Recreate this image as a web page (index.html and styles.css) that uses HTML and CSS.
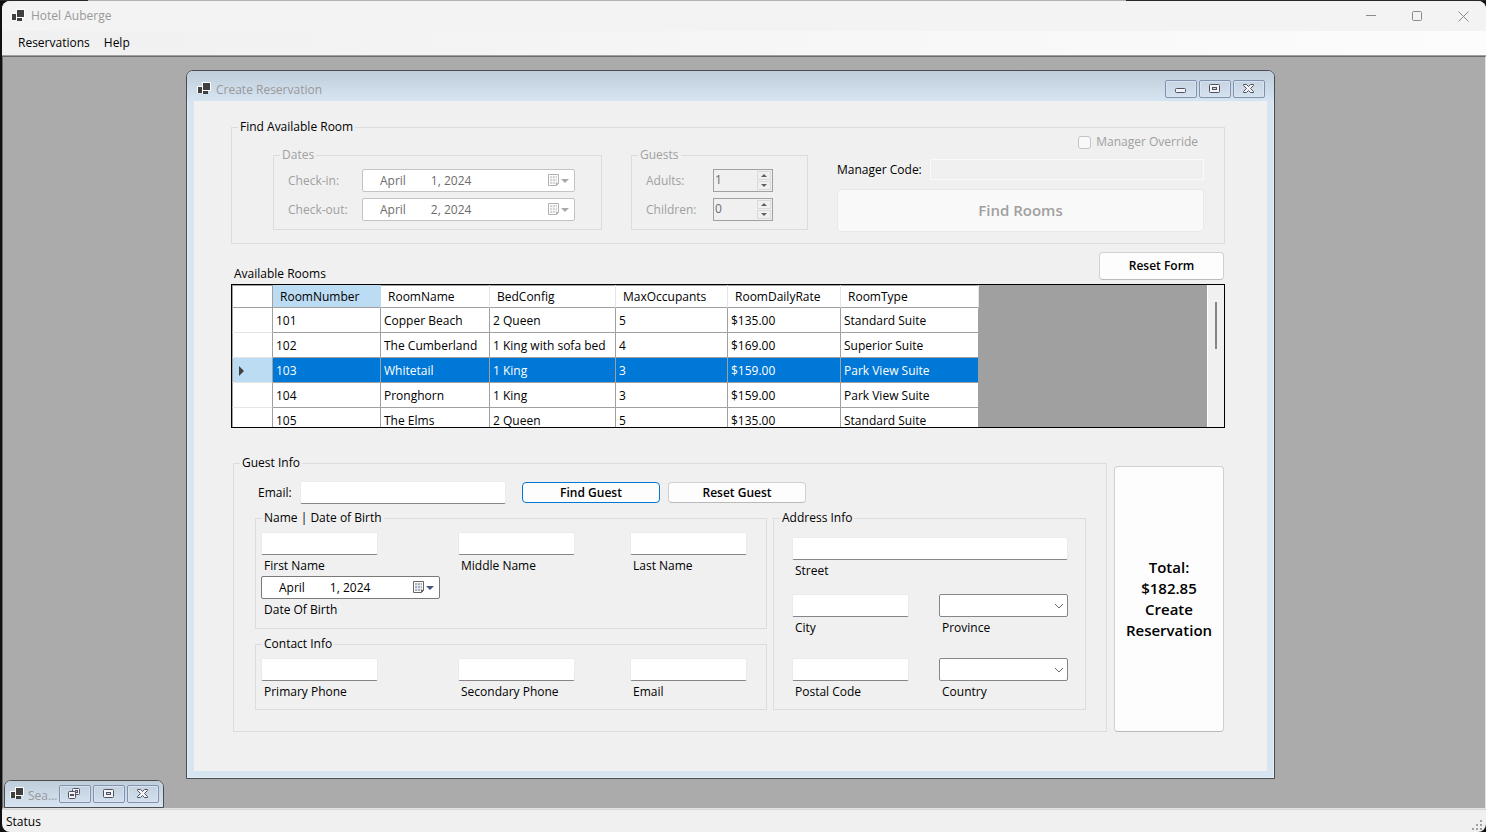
FILE: index.html
```html
<!DOCTYPE html>
<html lang="en">
<head>
<meta charset="utf-8">
<title>Hotel Auberge</title>
<link rel="stylesheet" href="styles.css">
</head>
<body>
<svg class="defs" aria-hidden="true">
  <symbol id="app" viewBox="0 0 14 14">
    <path fill="#fff" d="M0 4h5V0h9v9h-3v3H5v-1H0z"/>
    <path fill="#404040" d="M1 5h4v6H1zM6 1h7v7H6zM6 9h5v3H6z"/>
  </symbol>
  <symbol id="cal" viewBox="0 0 12 13">
    <path fill="#fff" stroke="#6b6464" d="M.5.5h10v9l-2 2h-8z"/>
    <path fill="#aab4c4" d="M2 2h7v8H2z"/>
    <path stroke="#fff" stroke-opacity=".6" d="M2 4.500h7M2 7.500h7M4.500 2v8M7.500 2v8"/>
    <path fill="#6b6464" d="M8 12V9h3z"/>
  </symbol>
  <symbol id="min" viewBox="0 0 14 12">
    <rect x="1.500" y="5.500" width="10" height="4" rx="1" fill="#f4f4f4" stroke="#505064"/>
  </symbol>
  <symbol id="max" viewBox="0 0 14 12">
    <rect x="1.500" y="1.500" width="10" height="8" rx="1" fill="#f4f4f4" stroke="#505064"/>
    <rect x="4.500" y="4.500" width="4" height="2" fill="#c9d6e4" stroke="#505064"/>
  </symbol>
  <symbol id="restore" viewBox="0 0 14 12">
    <rect x="4.500" y=".5" width="7" height="6" rx="1" fill="#f4f4f4" stroke="#505064"/>
    <rect x="7.500" y="2.500" width="2" height="2" fill="#c9d6e4" stroke="#505064"/>
    <rect x=".5" y="3.500" width="7" height="7" rx="1" fill="#f4f4f4" stroke="#505064"/>
    <rect x="2.500" y="6.500" width="3" height="1" fill="#c9d6e4" stroke="#505064"/>
  </symbol>
  <symbol id="close" viewBox="0 0 14 12">
    <path fill="#f4f4f4" stroke="#505064" stroke-linejoin="round" d="M1.500 1.500h3l2 2 2-2h3v1l-3 3 3 3v1h-3l-2-2-2 2h-3v-1l3-3-3-3z"/>
  </symbol>
</svg>

<div class="app">
  <header class="titlebar">
    <svg class="app-icon"><use href="#app"/></svg>
    <h1 class="title">Hotel Auberge</h1>
    <button class="sys" aria-label="Minimize"><svg width="11" height="11"><path d="M0 4.500h10"/></svg></button>
    <button class="sys" aria-label="Maximize"><svg width="11" height="11"><rect x=".5" y=".5" width="9" height="9" rx="1"/></svg></button>
    <button class="sys" aria-label="Close"><svg width="11" height="11"><path d="M.5.5l10 10M10.500.5l-10 10"/></svg></button>
  </header>
  <nav class="menu">
    <button class="menu-item">Reservations</button>
    <button class="menu-item">Help</button>
  </nav>

  <main class="desktop">
    <section class="child reservation">
      <div class="child-bar">
        <svg class="app-icon"><use href="#app"/></svg>
        <h2 class="title">Create Reservation</h2>
        <button class="cap" aria-label="Minimize"><svg><use href="#min"/></svg></button>
        <button class="cap" aria-label="Maximize"><svg><use href="#max"/></svg></button>
        <button class="cap" aria-label="Close"><svg><use href="#close"/></svg></button>
      </div>
      <form class="form">
        <fieldset class="group">
          <legend>Find Available Room</legend>
          <div class="search">
            <fieldset class="group" disabled>
              <legend>Dates</legend>
              <div class="rows">
                <div class="row">
                  <label class="date-label" for="checkin">Check-in:</label>
                  <span class="date"><input id="checkin" type="text" value="April        1, 2024"><button type="button" aria-label="Open calendar"><svg class="cal"><use href="#cal"/></svg><i class="down"></i></button></span>
                </div>
                <div class="row">
                  <label class="date-label" for="checkout">Check-out:</label>
                  <span class="date"><input id="checkout" type="text" value="April        2, 2024"><button type="button" aria-label="Open calendar"><svg class="cal"><use href="#cal"/></svg><i class="down"></i></button></span>
                </div>
              </div>
            </fieldset>
            <fieldset class="group" disabled>
              <legend>Guests</legend>
              <div class="rows">
                <div class="row">
                  <label class="count-label" for="adults">Adults:</label>
                  <span class="spin"><input id="adults" type="number" value="1"><span class="spin-keys"><button type="button" aria-label="More adults"><i class="up"></i></button><button type="button" aria-label="Fewer adults"><i class="down"></i></button></span></span>
                </div>
                <div class="row">
                  <label class="count-label" for="children">Children:</label>
                  <span class="spin"><input id="children" type="number" value="0"><span class="spin-keys"><button type="button" aria-label="More children"><i class="up"></i></button><button type="button" aria-label="Fewer children"><i class="down"></i></button></span></span>
                </div>
              </div>
            </fieldset>
            <div class="manager">
              <label class="override"><input type="checkbox" disabled>Manager Override</label>
              <div class="row code">
                <label for="code">Manager Code:</label>
                <input id="code" type="text" disabled>
              </div>
              <button class="btn large find" type="button" disabled>Find Rooms</button>
            </div>
          </div>
        </fieldset>

        <div class="rooms-head">
          <span id="rooms-label">Available Rooms</span>
          <button class="btn reset" type="button">Reset Form</button>
        </div>
        <div class="rooms">
          <table aria-labelledby="rooms-label">
            <colgroup><col class="c-head"><col class="c-num"><col class="c-name"><col class="c-bed"><col class="c-max"><col class="c-rate"><col class="c-type"></colgroup>
            <thead>
              <tr><th></th><th class="current">RoomNumber</th><th>RoomName</th><th>BedConfig</th><th>MaxOccupants</th><th>RoomDailyRate</th><th>RoomType</th></tr>
            </thead>
            <tbody>
              <tr><th></th><td>101</td><td>Copper Beach</td><td>2 Queen</td><td>5</td><td>$135.00</td><td>Standard Suite</td></tr>
              <tr><th></th><td>102</td><td>The Cumberland</td><td>1 King with sofa bed</td><td>4</td><td>$169.00</td><td>Superior Suite</td></tr>
              <tr class="selected"><th><i class="pointer"></i></th><td>103</td><td>Whitetail</td><td>1 King</td><td>3</td><td>$159.00</td><td>Park View Suite</td></tr>
              <tr><th></th><td>104</td><td>Pronghorn</td><td>1 King</td><td>3</td><td>$159.00</td><td>Park View Suite</td></tr>
              <tr><th></th><td>105</td><td>The Elms</td><td>2 Queen</td><td>5</td><td>$135.00</td><td>Standard Suite</td></tr>
            </tbody>
          </table>
          <div class="scroll"><i class="thumb"></i></div>
        </div>

        <div class="guest">
          <fieldset class="group guest-info">
            <legend>Guest Info</legend>
            <div class="row lookup">
              <label for="email">Email:</label>
              <input class="text" id="email" type="text">
              <button class="btn default" type="button">Find Guest</button>
              <button class="btn" type="button">Reset Guest</button>
            </div>
            <div class="details">
              <div class="person">
                <fieldset class="group">
                  <legend>Name | Date of Birth</legend>
                  <div class="thirds">
                    <div class="field"><input class="text" id="first" type="text"><label for="first">First Name</label></div>
                    <div class="field"><input class="text" id="middle" type="text"><label for="middle">Middle Name</label></div>
                    <div class="field"><input class="text" id="last" type="text"><label for="last">Last Name</label></div>
                  </div>
                  <div class="field birth">
                    <span class="date"><input id="dob" type="text" value="April        1, 2024"><button type="button" aria-label="Open calendar"><svg class="cal"><use href="#cal"/></svg><i class="down"></i></button></span>
                    <label for="dob">Date Of Birth</label>
                  </div>
                </fieldset>
                <fieldset class="group">
                  <legend>Contact Info</legend>
                  <div class="thirds">
                    <div class="field"><input class="text" id="phone1" type="text"><label for="phone1">Primary Phone</label></div>
                    <div class="field"><input class="text" id="phone2" type="text"><label for="phone2">Secondary Phone</label></div>
                    <div class="field"><input class="text" id="mail" type="text"><label for="mail">Email</label></div>
                  </div>
                </fieldset>
              </div>
              <fieldset class="group">
                <legend>Address Info</legend>
                <div class="address">
                  <div class="field street"><input class="text" id="street" type="text"><label for="street">Street</label></div>
                  <div class="field"><input class="text" id="city" type="text"><label for="city">City</label></div>
                  <div class="field combo"><select id="province"></select><svg class="chevron"><path d="M0 1l4 4 4-4"/></svg><label for="province">Province</label></div>
                  <div class="field postal"><input class="text" id="postal" type="text"><label for="postal">Postal Code</label></div>
                  <div class="field combo postal"><select id="country"></select><svg class="chevron"><path d="M0 1l4 4 4-4"/></svg><label for="country">Country</label></div>
                </div>
              </fieldset>
            </div>
          </fieldset>
          <button class="btn large create" type="submit">Total:<br>$182.85<br>Create<br>Reservation</button>
        </div>
      </form>
    </section>

    <section class="child minimized">
      <div class="child-bar">
        <svg class="app-icon"><use href="#app"/></svg>
        <h2 class="title">Sea...</h2>
        <button class="cap" aria-label="Restore"><svg><use href="#restore"/></svg></button>
        <button class="cap" aria-label="Maximize"><svg><use href="#max"/></svg></button>
        <button class="cap" aria-label="Close"><svg><use href="#close"/></svg></button>
      </div>
    </section>
  </main>

  <footer class="status">
    <span>Status</span>
    <svg class="grip" width="12" height="12"><path d="M8 0h2v2H8zM4 4h2v2H4zM8 4h2v2H8zM0 8h2v2H0zM4 8h2v2H4zM8 8h2v2H8z"/></svg>
  </footer>
</div>
</body>
</html>
```

FILE: styles.css
```css
* { box-sizing: border-box; }

body {
  margin: 0;
  min-height: 100vh;
  display: flex;
  flex-direction: column;
  padding: 1px 0 0 2px;
  background: linear-gradient(90deg, #2a2628 88px, #b4b4b4 88px, #b4b4b4 1126px, #2a2628 1126px) 0 0 / 100% 1px no-repeat #101010;
  font: 12px/16px "Open Sans", "Noto Sans", sans-serif;
  color: #000;
}

button, input, select { font: inherit; color: inherit; margin: 0; padding: 0; border: 0; background: none; outline: 0; }
button, i { display: block; }
svg { display: block; }
.defs { position: absolute; width: 0; height: 0; }

.app {
  flex: 1;
  display: flex;
  flex-direction: column;
  background: #f0f0f0;
  border-radius: 8px;
  overflow: hidden;
}

/* Main window bars */
.titlebar { display: flex; align-items: center; height: 30px; padding-left: 9px; background: #f3f3f3; }
.app-icon { width: 14px; height: 14px; flex: none; }
.title { flex: 1; margin: 0 0 0 6px; font-size: 12px; font-weight: 400; color: #999; white-space: nowrap; }
.sys { width: 46px; height: 30px; display: grid; place-items: center; }
.sys svg { fill: none; stroke: #8b8b8b; }
.menu { display: flex; gap: 14px; height: 25px; padding: 0 16px 2px; background: linear-gradient(90deg, #f0f0f0, #fcfcfc); }

.desktop {
  position: relative;
  flex: 1;
  min-height: 753px;
  border: 1px solid #696969;
  border-color: #696969 #e3e3e3 #e3e3e3 #696969;
  box-shadow: 0 -1px #a0a0a0;
  background: #ababab;
}

.status {
  display: flex;
  align-items: center;
  justify-content: space-between;
  height: 23px;
  padding: 2px 2px 0 4px;
  border-top: 1px solid #d7d7d7;
  box-shadow: 0 -1px #fff;
}
.grip { fill: #a0a0a0; align-self: flex-end; }

/* Child windows */
.child {
  position: absolute;
  border: 1px solid #4a4c50;
  border-radius: 7px 7px 0 0;
  background: #d7e4f2;
  box-shadow: inset 0 0 0 1px #e6eff8;
}
.child-bar {
  display: flex;
  align-items: center;
  gap: 2px;
  border-radius: 6px 6px 0 0;
  background: linear-gradient(#bfcddb, #d7e4f2);
}
.reservation { top: 13px; left: 183px; right: 210px; min-width: 1000px; padding: 0 7px 7px; }
.reservation .child-bar { height: 30px; margin: 0 -7px; padding: 6px 9px 0 10px; }
.reservation .title { margin-left: 3px; padding-top: 2px; }
.minimized { left: 1px; bottom: 0; width: 160px; }
.minimized .child-bar { height: 26px; padding: 0 4px 0 5px; }
.minimized .title { margin-left: 2px; padding-top: 3px; }
.cap {
  width: 32px;
  height: 18px;
  display: grid;
  place-items: center;
  border: 1px solid #8192ae;
  border-radius: 2px;
  box-shadow: inset 0 0 0 1px #d8e3ef;
}
.cap svg { width: 14px; height: 12px; }

/* Form */
.form { padding: 18px 42px 39px 37px; background: #f0f0f0; }
.group { min-width: 0; margin: 0; padding: 0 6px; border: 1px solid #dcdcdc; }
.group legend { padding: 0 2px; }
.group:disabled { color: #a0a0a0; }
.row { display: flex; align-items: center; }

.search { display: grid; grid-template-columns: 329fr 177fr 367fr; align-items: start; column-gap: 29px; padding: 0 14px 11px 35px; }
.search .group { margin-top: 12px; }
.rows { display: grid; gap: 6px; padding: 6px 20px 8px 8px; }
.date-label { width: 74px; }
.count-label { width: 67px; }

.date { flex: 1; display: flex; height: 23px; border: 1px solid #7a7a7a; border-radius: 2px; background: #fff; }
.date input { flex: 1; min-width: 0; padding-left: 17px; }
.date button { display: flex; align-items: center; gap: 1px; padding-right: 5px; }
.date input:disabled { color: #6d6d6d; }
.group:disabled .date { border-color: #c3c3c3; }
.group:disabled .date button { opacity: .5; filter: grayscale(1); }
.cal { width: 12px; height: 13px; }
.down, .up { width: 0; height: 0; border: 4px solid transparent; }
.down { border-top-color: #44567c; border-bottom: 0; }
.up { border-bottom-color: #606060; border-top: 0; }

.spin { width: 60px; display: flex; height: 23px; padding: 1px; border: 1px solid #a0a0a6; }
.spin input { flex: 1; min-width: 0; height: 17px; color: #6d6d6d; appearance: textfield; }
.spin input::-webkit-inner-spin-button { appearance: none; }
.spin-keys { display: grid; gap: 1px; }
.spin-keys button { width: 14px; display: grid; place-items: center; border: 1px solid #dadada; }
.spin-keys i { border-width: 3px; }
.spin-keys .up { border-top: 0; }
.spin-keys .down { border-bottom: 0; border-top-color: #606060; }

.manager { display: flex; flex-direction: column; }
.override { display: flex; align-items: center; align-self: flex-end; gap: 5px; height: 14px; margin-right: 6px; color: #a0a0a0; }
.override input { width: 13px; height: 13px; appearance: none; border: 1px solid #c4c4c4; border-radius: 3px; background: #f9f9f9; }
.code { gap: 8px; margin: 10px 0 9px; }
.code label { white-space: nowrap; }
.code input { flex: 1; min-width: 0; height: 21px; border: 1px solid #fafafa; }

.btn { border: 1px solid #d0d0d0; border-bottom-color: #bababa; border-radius: 4px; background: #fdfdfd; font-weight: 600; }
.btn.large { font-size: 15px; line-height: 21px; }
.btn:disabled { border-color: #e8e8e8; background: #f9f9f9; color: #a0a0a0; }
.btn.default { border-color: #0078d4; }
.find { height: 43px; }

.rooms-head { display: flex; justify-content: space-between; align-items: flex-end; height: 30px; margin: 8px 1px 2px 3px; }
.reset { width: 125px; height: 28px; align-self: flex-start; }

.rooms { display: flex; justify-content: space-between; height: 144px; border: 1px solid #000; background: #a0a0a0; overflow: hidden; }
.rooms table { table-layout: fixed; width: 747px; flex: none; align-self: flex-start; border-collapse: separate; border-spacing: 0; background: #fff; box-shadow: inset 1px 1px #a0a0a0; }
.c-head { width: 41px; }
.c-num { width: 108px; }
.c-name { width: 109px; }
.c-bed { width: 126px; }
.c-max { width: 112px; }
.c-rate { width: 113px; }
.c-type { width: 138px; }
.rooms th, .rooms td { height: 25px; padding: 2px 3px 0; border: 0 solid #a0a0a0; border-width: 0 1px 1px 0; text-align: left; font-weight: 400; white-space: nowrap; }
.rooms thead th { height: 23px; padding: 2px 7px 0; border-right-color: #e5e5e5; }
.rooms tr th:first-child { border-right-color: #a0a0a0; }
.rooms tbody th { border-bottom-color: #e5e5e5; border-left: 1px solid #a0a0a0; padding-left: 6px; }
.rooms .current, .selected th { background: #bcdcf4; }
.rooms .current { border-right-color: #bcdcf4; }
.selected td { background: #0078d7; color: #fff; }
.pointer { width: 0; height: 0; border: 5px solid transparent; border-left-color: #404040; border-right: 0; }
.scroll { width: 17px; padding: 17px 7px; background: #f0f0f0; border-left: 1px solid #fff; }
.thumb { width: 2px; height: 47px; background: #858585; }

.guest { display: flex; gap: 7px; margin: 27px 1px 0 2px; }
.guest-info { flex: 1; }
.create { width: 110px; margin-top: 11px; }

.text { height: 23px; border: 1px solid #ebebeb; border-bottom-color: #868686; border-radius: 2px; background: #fff; }
.lookup { padding: 10px 0 0 18px; }
.lookup label { width: 42px; }
.lookup .text { width: 206px; margin-right: 16px; }
.lookup .btn { width: 138px; height: 21px; line-height: 19px; margin-right: 8px; }

.details { display: grid; grid-template-columns: 512fr 313fr; gap: 6px; padding: 6px 14px 21px 15px; }
.person { display: grid; gap: 7px; }
.thirds { display: grid; grid-template-columns: 197fr 172fr 130fr; padding: 6px 0 0; }
.person .group { padding: 0 6px 9px 5px; }
.person legend { margin-left: 1px; }
.field { display: flex; flex-direction: column; min-width: 0; }
.field label { margin: 3px 0 0 3px; }
.thirds .text { width: 117px; }
.birth { margin: 2px 0 1px; }
.birth .date { flex: none; width: 179px; }

.address { display: grid; grid-template-columns: 117px 129px; justify-content: space-between; row-gap: 15px; padding: 11px 11px 0 12px; }
.street { grid-column: 1 / -1; }
.postal { margin-top: 7px; }
.combo { position: relative; }
.combo select { height: 23px; appearance: none; border: 1px solid #868686; border-radius: 2px; background: #fff; }
.chevron { position: absolute; top: 9px; right: 4px; width: 9px; height: 6px; fill: none; stroke: #6a6a6a; pointer-events: none; }
```
